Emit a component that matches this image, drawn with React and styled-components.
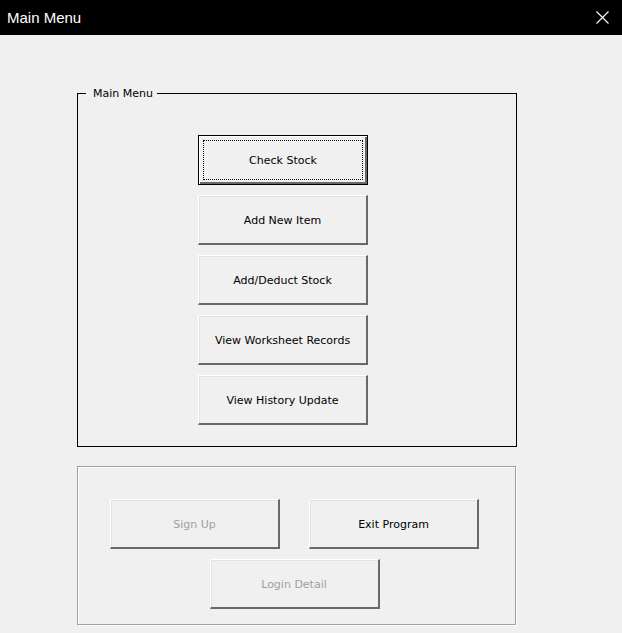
import styled, { createGlobalStyle, css } from "styled-components";

const GlobalStyle = createGlobalStyle`
  html, body {
    margin: 0;
    padding: 0;
    background: #f0f0f0;
  }
  body {
    font-family: "Liberation Sans", Arial, sans-serif;
  }
`;

const Window = styled.div`
  width: 622px;
  height: 633px;
  overflow: hidden;
  background: #f0f0f0;
  display: flex;
  flex-direction: column;
`;

const TitleBar = styled.div`
  height: 35px;
  flex: none;
  background: #000;
  color: #fff;
  display: flex;
  align-items: center;
  justify-content: space-between;
  padding: 0 13px 0 7px;
  font-size: 15px;
`;

const CloseIcon = styled.svg`
  width: 13px;
  height: 13px;
  display: block;
`;

const Content = styled.div`
  padding: 51px 0 0 77px;
  display: flex;
  flex-direction: column;
  gap: 19px;
`;

const MenuFrame = styled.fieldset`
  box-sizing: border-box;
  width: 440px;
  margin: 0;
  padding: 34px 0 21px 0;
  border: 1px solid #000;
  min-width: 0;
`;

const Legend = styled.legend`
  margin-left: 8px;
  padding: 0 4px 0 7px;
  font-family: "DejaVu Sans", Tahoma, sans-serif;
  font-size: 11px;
  line-height: 15px;
  color: #000;
`;

const ButtonColumn = styled.div`
  display: flex;
  flex-direction: column;
  gap: 10px;
  padding-left: 120px;
`;

const ActionFrame = styled.div`
  box-sizing: border-box;
  width: 439px;
  height: 159px;
  border: 1px solid #a0a0a0;
  box-shadow: inset 1px 1px #fff, 1px 1px #fff;
  padding: 32px 0 0 32px;
  display: grid;
  grid-template-columns: 170px 170px;
  column-gap: 29px;
  row-gap: 10px;
  align-content: start;
`;

const Button = styled.button`
  box-sizing: border-box;
  width: 170px;
  height: 50px;
  margin: 0;
  padding: 1px 0 0;
  background: #f0f0f0;
  font-family: "DejaVu Sans", Tahoma, sans-serif;
  font-size: 11px;
  color: ${(p) => (p.disabled ? "#a0a0a0" : "#000")};
  border-style: solid;
  border-width: 1px 2px 2px 1px;
  border-color: #fff #696969 #696969 #fff;
  box-shadow: inset 1px 1px #e3e3e3;
  cursor: default;
  ${(p) =>
    p.$default &&
    css`
      padding: 0;
      border: 1px solid #000;
      box-shadow: inset 1px 1px #fff, inset -2px -2px #696969;
      outline: 1px dotted #000;
      outline-offset: -6px;
    `}
  ${(p) =>
    p.$centered &&
    css`
      grid-column: 1 / span 2;
      justify-self: center;
    `}
`;

const menuItems = [
  "Check Stock",
  "Add New Item",
  "Add/Deduct Stock",
  "View Worksheet Records",
  "View History Update",
];

export default function App() {
  return (
    <>
      <GlobalStyle />
      <Window>
        <TitleBar>
          <span>Main Menu</span>
          <CloseIcon viewBox="0 0 13 13">
            <path d="M0.5 0.5 L12.5 12.5 M12.5 0.5 L0.5 12.5" stroke="#fff" strokeWidth="1.1" />
          </CloseIcon>
        </TitleBar>
        <Content>
          <MenuFrame>
            <Legend>Main Menu</Legend>
            <ButtonColumn>
              {menuItems.map((label, i) => (
                <Button key={label} $default={i === 0}>
                  {label}
                </Button>
              ))}
            </ButtonColumn>
          </MenuFrame>
          <ActionFrame>
            <Button disabled>Sign Up</Button>
            <Button>Exit Program</Button>
            <Button disabled $centered>
              Login Detail
            </Button>
          </ActionFrame>
        </Content>
      </Window>
    </>
  );
}
